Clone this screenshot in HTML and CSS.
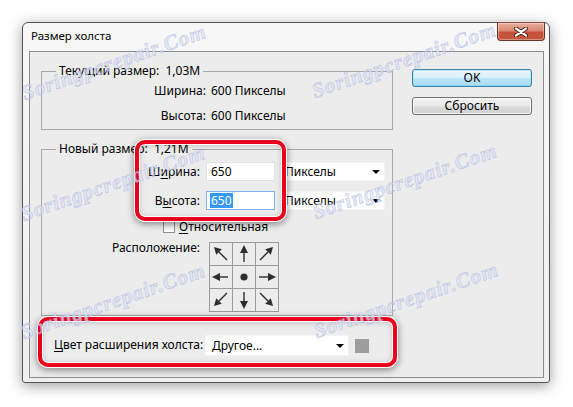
FILE: index.html
```html
<!DOCTYPE html>
<html lang="ru">
<head>
<meta charset="utf-8">
<title>Размер холста</title>
<link rel="stylesheet" href="styles.css">
</head>
<body>
<div class="stage">
  <div class="dialog">
    <div class="titlebar">
      <div class="title">Размер холста</div>
      <div class="close">
        <svg width="14" height="10" viewBox="0 0 14 10">
          <path d="M2 1.5 L12 8.5 M12 1.5 L2 8.5" stroke="#4b2019" stroke-width="4.2" stroke-linecap="round"/>
          <path d="M2 1.5 L12 8.5 M12 1.5 L2 8.5" stroke="#ffffff" stroke-width="2.2" stroke-linecap="round"/>
        </svg>
      </div>
    </div>
    <div class="client">
      <div class="left">
        <fieldset class="group current">
          <legend>Текущий размер:&nbsp; 1,03М</legend>
          <div class="info">
            <span class="k">Ширина:</span><span class="v">600 Пикселы</span>
            <span class="k">Высота:</span><span class="v">600 Пикселы</span>
          </div>
        </fieldset>
        <fieldset class="group newsize">
          <legend>Новый размер:&nbsp; 1,21М</legend>
          <div class="frow">
            <span class="flabel">Ш<u>и</u>рина:</span>
            <div class="field">650</div>
            <div class="combo units">Пикселы<span class="tri"></span></div>
          </div>
          <div class="frow">
            <span class="flabel">В<u>ы</u>сота:</span>
            <div class="field focused"><span class="sel">650</span></div>
            <div class="combo units">Пикселы<span class="tri"></span></div>
          </div>
          <div class="checkrow">
            <span class="checkbox"></span><span><u>О</u>тносительная</span>
          </div>
          <div class="anchorrow">
            <span class="flabel alabel">Расположение:</span>
            <svg class="anchor" width="70" height="70" viewBox="0 0 70 70">
              <g stroke="#9b9b9b" stroke-width="1" fill="none">
                <rect x="0.5" y="0.5" width="69" height="69"/>
                <path d="M23.5 0 V70 M46.5 0 V70 M0 23.5 H70 M0 46.5 H70"/>
              </g>
              <g stroke="#2e2e2e" stroke-width="1.4" fill="none">
                <path d="M10 10 L18 18"/>
                <path d="M35 10 V20"/>
                <path d="M59 10 L51 18"/>
                <path d="M10 35 H19"/>
                <path d="M60 35 H50"/>
                <path d="M10 59 L18 51"/>
                <path d="M35 60 V50"/>
                <path d="M59 59 L51 51"/>
              </g>
              <g fill="#2e2e2e">
                <polygon points="5,5 12.8,7.2 7.2,12.8"/>
                <polygon points="35,3 31,11 39,11"/>
                <polygon points="64,5 61.8,12.8 56.2,7.2"/>
                <polygon points="3,35 11,31 11,39"/>
                <polygon points="67,35 59,31 59,39"/>
                <polygon points="5,64 12.8,61.8 7.2,56.2"/>
                <polygon points="35,67 31,59 39,59"/>
                <polygon points="64,64 61.8,56.2 56.2,61.8"/>
                <circle cx="35" cy="35" r="3.6"/>
              </g>
            </svg>
          </div>
        </fieldset>
        <div class="redframe bottom">
          <span class="blabel"><u>Ц</u>вет расширения холста:</span>
          <div class="combo other">Другое...<span class="tri"></span></div>
          <span class="swatch"></span>
        </div>
      </div>
      <div class="buttons">
        <div class="btn ok">OK</div>
        <div class="btn">Сбросить</div>
      </div>
      <div class="redframe overlay"></div>
    </div>
  </div>
</div>
<div class="watermarks">
  <span class="wm wm1">Soringpcrepair.Com</span>
  <span class="wm wm2">Soringpcrepair.Com</span>
  <span class="wm wm3">Soringpcrepair.Com</span>
  <span class="wm wm4">Soringpcrepair.Com</span>
  <span class="wm wm5">Soringpcrepair.Com</span>
  <span class="wm wm6">Soringpcrepair.Com</span>
</div>
</body>
</html>
```
FILE: styles.css
```css
* { box-sizing: border-box; }
html, body { margin: 0; padding: 0; }
body {
  width: 573px;
  height: 407px;
  background: #ffffff;
  font-family: "Noto Sans", "Open Sans", sans-serif;
  font-size: 12px;
  line-height: 16px;
  color: #000;
  position: relative;
  overflow: hidden;
}
u { text-decoration: underline; text-underline-offset: 2px; }

.stage { padding: 22px 0 0 22px; }

.dialog {
  width: 528px;
  height: 361px;
  border: 1px solid #555;
  border-radius: 6px 6px 3px 3px;
  background: linear-gradient(#f7f7f7, #efefef);
  box-shadow: 0 3px 14px rgba(0,0,0,.38);
  display: flex;
  flex-direction: column;
}

.titlebar {
  height: 28px;
  flex: none;
  display: flex;
  justify-content: space-between;
  align-items: flex-start;
  padding: 0 4px 0 8px;
}
.title { margin-top: 5px; font-size: 11.5px; }
.close {
  width: 48px;
  height: 19px;
  margin-top: -1px;
  border: 1px solid #6f3026;
  border-top-color: #8a4a40;
  border-radius: 0 0 4px 4px;
  background: linear-gradient(#e8ae9f 0%, #d98672 45%, #c6513b 55%, #c5573f 100%);
  box-shadow: inset 0 0 0 1px rgba(255,255,255,.35);
  display: flex;
  align-items: center;
  justify-content: center;
}

.client {
  flex: 1;
  margin: 0 5px 4px 6px;
  border: 1px solid #8c8c8c;
  background: #ececec;
  display: flex;
  align-items: flex-start;
  padding: 11px 0 0 11px;
  position: relative;
}

.left { width: 352px; display: flex; flex-direction: column; }

.group {
  margin: 0;
  padding: 0;
  border: 1px solid #a9a9a9;
  min-width: 0;
}
.group legend {
  margin-left: 14px;
  padding: 0 3px;
  line-height: 16px;
}
.current { padding: 4px 0 5px 0; }
.info {
  display: grid;
  grid-template-columns: 164px auto;
  column-gap: 5px;
  row-gap: 9px;
}
.info .k { text-align: right; }

.newsize { margin-top: 11px; padding: 5px 0 3px 0; }
.frow { display: flex; align-items: center; height: 19px; }
.frow + .frow { margin-top: 10px; }
.flabel { width: 158px; text-align: right; margin-right: 6px; }
.field {
  width: 69px;
  height: 19px;
  background: #fff;
  border: 1px solid #e3e3e3;
  padding-left: 4px;
  line-height: 17px;
}
.field.focused { border-color: #7eb4ea; padding-left: 3px; }
.sel { background: #3399ff; color: #fff; padding: 0 1px; display: inline-block; line-height: 15px; }
.combo {
  position: relative;
  background: #fff;
  border: 1px solid #f4f4f4;
  height: 19px;
  line-height: 17px;
  padding-left: 1px;
}
.units { width: 102px; margin-left: 8px; }
.tri {
  position: absolute;
  right: 4px;
  top: 50%;
  margin-top: -2px;
  width: 0; height: 0;
  border-left: 4px solid transparent;
  border-right: 4px solid transparent;
  border-top: 4px solid #000;
}

.checkrow {
  margin-top: 9px;
  padding-left: 121px;
  display: flex;
  align-items: center;
  height: 16px;
}
.checkbox {
  width: 12px; height: 12px;
  border: 1px solid #8e8f8f;
  background: linear-gradient(#e6e6e6, #ffffff);
  margin-right: 4px;
}

.anchorrow { margin-top: 7px; display: flex; align-items: flex-start; }
.alabel { margin-right: 9px; margin-top: -2px; }
.anchor { display: block; }

.redframe {
  border: 4px solid #e8001c;
  border-radius: 10px;
  box-shadow: 0 0 0 1px #fff, 0 2px 7px 1px rgba(0,0,0,.45), inset 0 0 0 1px #fff, inset 0 1px 6px rgba(0,0,0,.22);
}
.bottom {
  margin: 1px 0 0 -3px;
  width: 359px;
  height: 50px;
  padding: 14px 0 0 12px;
  display: flex;
  align-items: flex-start;
}
.blabel { width: 151px; margin-top: 2px; }
.other { width: 144px; height: 21px; line-height: 19px; padding-left: 6px; }
.swatch { width: 14px; height: 14px; background: #9d9d9d; margin: 4px 0 0 6px; }

.overlay {
  position: absolute;
  left: 105px;
  top: 88px;
  width: 151px;
  height: 81px;
}

.buttons {
  width: 120px;
  margin-left: 19px;
  padding-top: 6px;
  display: flex;
  flex-direction: column;
  gap: 10px;
}
.btn {
  height: 18px;
  border: 1px solid #707070;
  border-radius: 3px;
  background: linear-gradient(#f2f2f2 0%, #ebebeb 50%, #dddddd 51%, #cfcfcf 100%);
  box-shadow: inset 0 0 0 1px rgba(255,255,255,.7);
  text-align: center;
  line-height: 16px;
}
.btn.ok {
  border-color: #3c7fb1;
  background: linear-gradient(#eaf6fd 0%, #d9f0fc 50%, #bee6fd 51%, #a7d9f5 100%);
  box-shadow: inset 0 0 0 1px #48d2fc40;
}

.watermarks { position: absolute; inset: 0; pointer-events: none; }
.wm {
  position: absolute;
  width: 200px;
  height: 24px;
  line-height: 24px;
  text-align: center;
  font-family: "Liberation Serif", "DejaVu Serif", serif;
  font-style: italic;
  font-weight: bold;
  font-size: 21px;
  letter-spacing: 1px;
  color: rgba(222,228,246,.7);
  -webkit-text-stroke: 0.6px rgba(150,165,215,.55);
  transform: rotate(-19deg);
  white-space: nowrap;
}
.wm1 { left: 14px; top: 50px; }
.wm2 { left: 304px; top: 48px; }
.wm3 { left: 13px; top: 171px; }
.wm4 { left: 305px; top: 169px; }
.wm5 { left: 13px; top: 289px; }
.wm6 { left: 306px; top: 288px; }
```
